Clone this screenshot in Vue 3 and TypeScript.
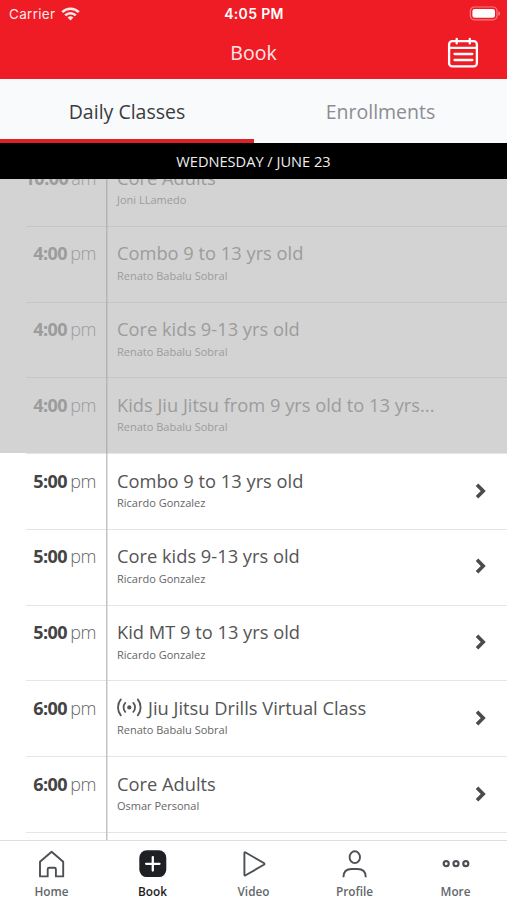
<script setup lang="ts">
interface ClassRow {
  time: string
  period: string
  title: string
  teacher: string
  past?: boolean
  virtual?: boolean
}

const rows: ClassRow[] = [
  { time: '10:00', period: 'am', title: 'Core Adults', teacher: 'Joni LLamedo', past: true },
  { time: '4:00', period: 'pm', title: 'Combo 9 to 13 yrs old', teacher: 'Renato Babalu Sobral', past: true },
  { time: '4:00', period: 'pm', title: 'Core kids 9-13 yrs old', teacher: 'Renato Babalu Sobral', past: true },
  { time: '4:00', period: 'pm', title: 'Kids Jiu Jitsu from 9 yrs old to 13 yrs...', teacher: 'Renato Babalu Sobral', past: true },
  { time: '5:00', period: 'pm', title: 'Combo 9 to 13 yrs old', teacher: 'Ricardo Gonzalez' },
  { time: '5:00', period: 'pm', title: 'Core kids 9-13 yrs old', teacher: 'Ricardo Gonzalez' },
  { time: '5:00', period: 'pm', title: 'Kid MT 9 to 13 yrs old', teacher: 'Ricardo Gonzalez' },
  { time: '6:00', period: 'pm', title: 'Jiu Jitsu Drills Virtual Class', teacher: 'Renato Babalu Sobral', virtual: true },
  { time: '6:00', period: 'pm', title: 'Core Adults', teacher: 'Osmar Personal' },
]

const tabs = ['Home', 'Book', 'Video', 'Profile', 'More']
</script>

<template>
  <div class="app">
    <header class="top">
      <div class="status">
        <div class="carrier">
          <span>Carrier</span>
          <svg width="19" height="14" viewBox="0 0 19 14">
            <g fill="none" stroke="#fff" stroke-width="2.6">
              <path d="M1.2 5.2a11.8 11.8 0 0 1 16.6 0" />
              <path d="M4.2 8.4a7.5 7.5 0 0 1 10.6 0" />
            </g>
            <path d="M6.6 10.6a4.1 4.1 0 0 1 5.8 0L9.5 13.6z" fill="#fff" />
          </svg>
        </div>
        <span class="clock">4:05 PM</span>
        <svg class="battery" width="32" height="16" viewBox="0 0 32 16">
          <rect x="1.4" y="1" width="26.6" height="12.8" rx="4" fill="none" stroke="#fff" stroke-opacity=".42" stroke-width="1.2" />
          <rect x="3.4" y="3" width="22.6" height="8.8" rx="2.3" fill="#fff" />
          <path d="M29.4 5.2a2.4 2.4 0 0 1 0 4.5z" fill="#fff" fill-opacity=".5" />
        </svg>
      </div>
      <div class="nav">
        <h1>Book</h1>
        <svg class="calendar" width="32" height="32" viewBox="0 0 32 32" fill="none" stroke="#fff" stroke-width="2.3" stroke-linecap="round">
          <rect x="2.1" y="4.2" width="27.8" height="25.2" rx="3.2" />
          <path d="M2.5 10.8h27M9.7 1.8v4.6M22.8 1.8v4.6M7.5 17h17.8M7.5 23h17.8" />
        </svg>
      </div>
    </header>

    <div class="segments">
      <div class="segment active"><span>Daily Classes</span></div>
      <div class="segment"><span>Enrollments</span></div>
    </div>
    <div class="date"><span>WEDNESDAY / JUNE 23</span></div>

    <main class="list">
      <div class="rows">
        <div v-for="(row, i) in rows" :key="i" class="row" :class="{ past: row.past }">
          <div class="time"><b>{{ row.time }}</b><span>{{ row.period }}</span></div>
          <div class="info">
            <div class="title">
              <svg v-if="row.virtual" width="26" height="20" viewBox="0 0 26 20" fill="none" stroke="#555" stroke-width="1.8" stroke-linecap="round">
                <circle cx="12.3" cy="9.4" r="2.1" fill="#555" stroke="none" />
                <path d="M8.3 4.9a6.7 6.7 0 0 0 0 9M16.3 4.9a6.7 6.7 0 0 1 0 9M3.8 1.4a12.8 12.8 0 0 0 0 16M20.8 1.4a12.8 12.8 0 0 1 0 16" />
              </svg>
              <span>{{ row.title }}</span>
            </div>
            <div class="teacher">{{ row.teacher }}</div>
          </div>
          <svg v-if="!row.past" class="chevron" width="12" height="16" viewBox="0 0 12 16" fill="none" stroke="#4b4b4b" stroke-width="3.6">
            <path d="M2 1.8 8.2 8 2 14.2" />
          </svg>
        </div>
        <div class="row"></div>
      </div>
    </main>

    <footer class="tabbar">
      <div v-for="tab in tabs" :key="tab" class="tab" :class="{ current: tab === 'Book' }">
        <svg width="30" height="30" viewBox="0 0 30 30" fill="none" stroke="#4c5056" stroke-width="1.9">
          <path v-if="tab === 'Home'" d="M3 27.4V12.8L14.6 2.7l11.6 10.1v14.6h-7.3v-7.2q0-1.5-1.5-1.5h-5.2q-1.5 0-1.5 1.5v7.2z" stroke-linejoin="round" />
          <template v-else-if="tab === 'Book'">
            <rect x="1.3" y="1.3" width="27" height="26.8" rx="7.5" fill="#1e2023" stroke="none" />
            <path d="M14.8 8.1v13.4M8.1 14.8h13.4" stroke="#fff" stroke-width="2.3" stroke-linecap="round" />
          </template>
          <path v-else-if="tab === 'Video'" d="M5.4 4.1v21.6q0 1.2 1.2.6L24.8 15.8q1.4-.9 0-1.8L6.6 3.5q-1.2-.6-1.2.6z" stroke-linejoin="round" />
          <template v-else-if="tab === 'Profile'">
            <ellipse cx="14.8" cy="8.2" rx="5.2" ry="5.9" />
            <path d="M3.4 28.2q0-8.2 8.4-8.2h5.6q8.4 0 8.4 8.2" />
          </template>
          <g v-else stroke-width="2.2">
            <circle cx="5.2" cy="14.7" r="2.5" />
            <circle cx="15" cy="14.7" r="2.5" />
            <circle cx="24.8" cy="14.7" r="2.5" />
          </g>
        </svg>
        <span>{{ tab }}</span>
      </div>
    </footer>
  </div>
</template>

<style>
body {
  margin: 0;
  overflow: hidden;
}
</style>

<style scoped>
.app {
  width: 507px;
  height: 900px;
  display: flex;
  flex-direction: column;
  overflow: hidden;
  background: #fff;
  font-family: 'Open Sans', sans-serif;
  white-space: nowrap;
}
.top {
  height: 79px;
  flex: none;
  background: #f01c25;
  color: #fff;
}
.status {
  height: 27px;
  display: grid;
  grid-template-columns: 1fr auto 1fr;
  align-items: center;
  padding: 0 6px 0 9px;
  box-sizing: border-box;
  font-family: Inter, sans-serif;
  font-size: 13.5px;
}
.carrier {
  display: flex;
  align-items: center;
  gap: 6px;
  opacity: 0.9;
  letter-spacing: 0.3px;
}
.clock {
  margin-left: -2px;
  font-size: 14px;
  font-weight: 600;
  letter-spacing: 0.35px;
}
.battery {
  justify-self: end;
}
.nav {
  height: 52px;
  display: grid;
  grid-template-columns: 1fr auto 1fr;
  align-items: center;
  padding: 0 28px;
}
h1 {
  grid-column: 2;
  margin: 0;
  font-size: 19.5px;
  font-weight: 400;
  line-height: 50px;
  opacity: 0.9;
}
.calendar {
  justify-self: end;
}
.segments {
  flex: none;
  height: 64px;
  display: grid;
  grid-template-columns: 254px 253px;
  background: #f8fafc;
}
.segment {
  text-align: center;
  font-size: 19.5px;
  line-height: 65px;
  color: #8b8d91;
  box-sizing: border-box;
  height: 64px;
}
.segment.active {
  color: #3a3c40;
  border-bottom: 4px solid #dd2128;
}
.date {
  flex: none;
  height: 36px;
  background: #000;
  color: #eee;
  text-align: center;
  font-size: 14.6px;
  line-height: 36px;
}
.list {
  flex: 1;
  min-height: 0;
  overflow: hidden;
}
.rows {
  margin-top: -29px;
}
.row {
  height: 75.75px;
  display: grid;
  grid-template-columns: 106px 1fr 12px;
  padding-right: 20px;
  background:
    linear-gradient(#c3c3c3, #c3c3c3) 106px 0 / 1.5px 100% no-repeat,
    linear-gradient(#e5e5e5, #e5e5e5) 26px 0 / 100% 1px no-repeat,
    #fff;
}
.row.past {
  background:
    linear-gradient(#b4b4b4, #b4b4b4) 106px 0 / 1.5px 100% no-repeat,
    linear-gradient(#c5c5c5, #c5c5c5) 26px 0 / 100% 1px no-repeat,
    #d3d3d3;
}
.time {
  display: flex;
  justify-content: flex-end;
  gap: 3px;
  padding: 14.5px 10px 0 0;
  font-size: 18px;
  line-height: 26px;
  color: #444;
}
.time b {
  letter-spacing: -0.5px;
}
.time span {
  font-weight: 300;
  letter-spacing: -0.4px;
  color: #666;
}
.info {
  padding: 14.5px 0 0 11px;
}
.title {
  display: flex;
  align-items: center;
  gap: 5px;
  height: 26px;
  font-size: 18.3px;
  line-height: 26px;
  color: #555;
}
.teacher {
  margin-top: 0.5px;
  font-size: 11px;
  line-height: 18px;
  color: #666;
}
.past .time,
.past .time span,
.past .title,
.past .teacher {
  color: #9c9c9c;
}
.chevron {
  margin-top: 29.5px;
}
.tabbar {
  flex: none;
  height: 60px;
  box-sizing: border-box;
  border-top: 1px solid #dedede;
  display: grid;
  grid-template-columns: repeat(5, 101px);
  padding: 8px 1px 0;
  background: #fff;
}
.tab {
  display: flex;
  flex-direction: column;
  align-items: center;
  font-size: 11.8px;
  font-weight: 600;
  line-height: 25px;
  color: #64676c;
}
.current {
  color: #1c1c1c;
}
</style>
